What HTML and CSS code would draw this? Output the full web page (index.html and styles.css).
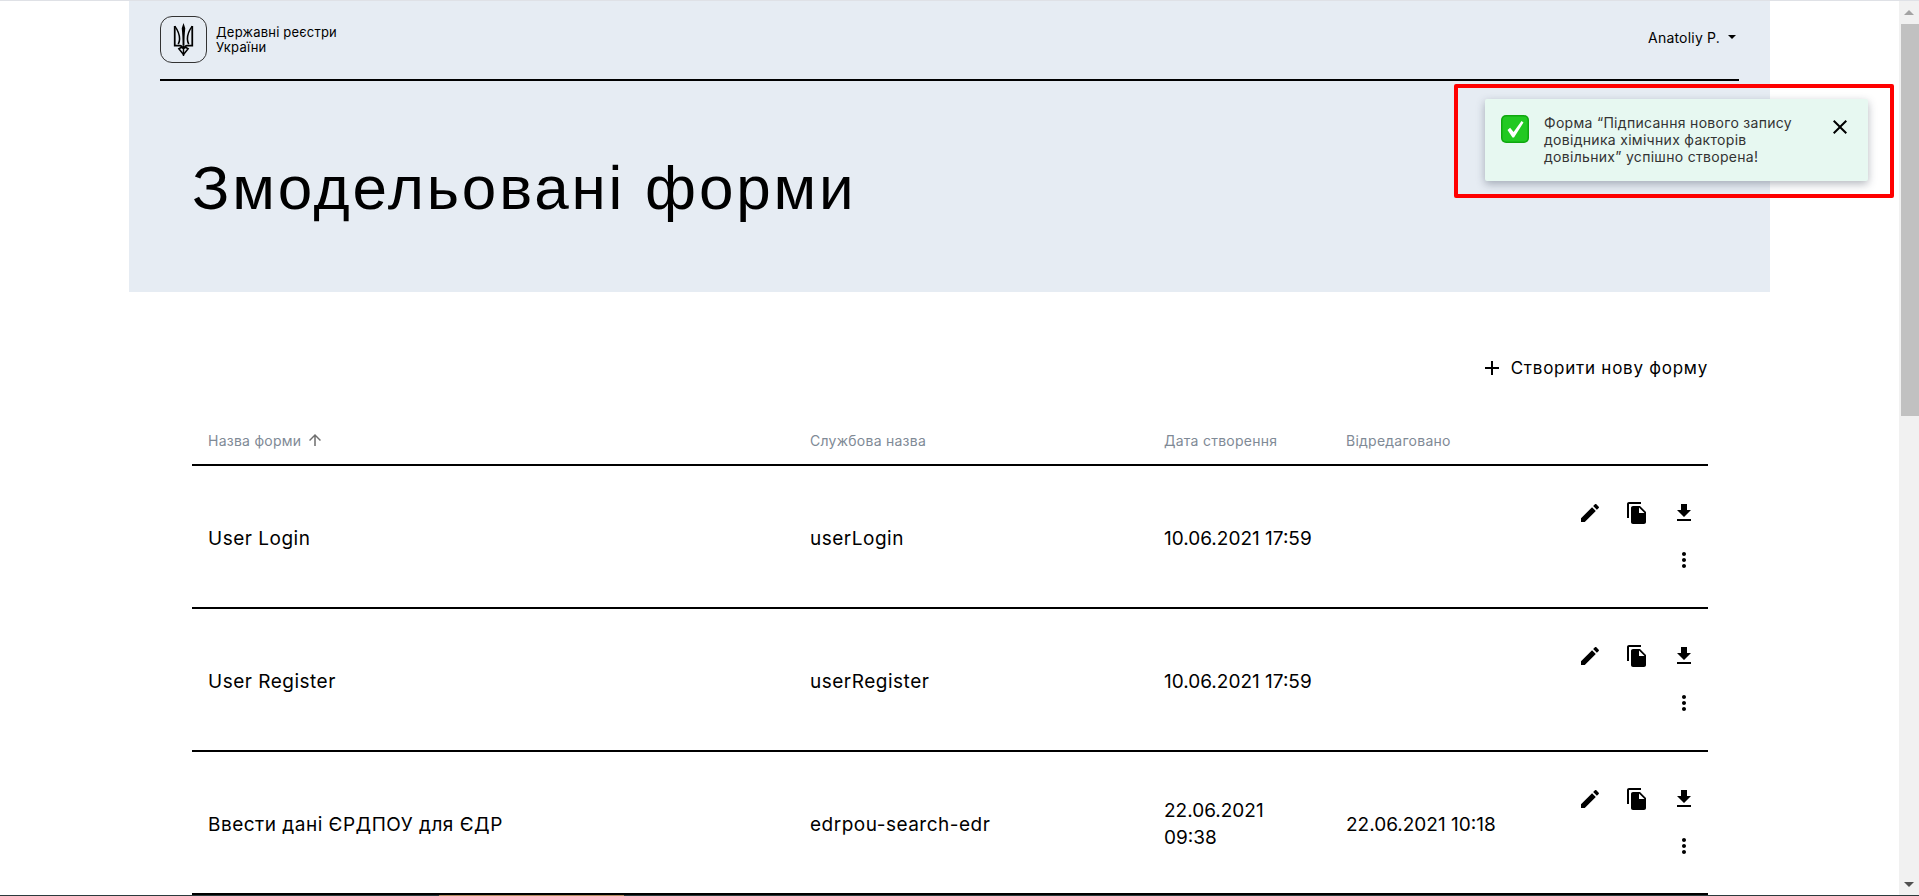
FILE: index.html
```html
<!DOCTYPE html>
<html lang="uk">
<head>
    <meta charset="UTF-8">
    <meta name="viewport" content="width=device-width, initial-scale=1.0">
    <title>Змодельовані форми</title>
    <link rel="stylesheet" href="styles.css">
</head>
<body>
    <div class="window">
        <div class="page">
            <header class="hero">
                <nav class="topbar">
                    <div class="brand">
                        <div class="brand-mark">
                            <svg class="trident" viewBox="0 0 20 32">
                                <path fill="none" stroke="#000" stroke-width="1.7" d="M1.5 3v19h5c1.6 0 2.4 1.2 2.8 3M18.500 3v19h-5c-1.600 0-2.400 1.200-2.800 3"/>
                                <path fill="none" stroke="#000" stroke-width="1.500" d="M1.500 3c3 4 4.700 8 4.700 12.500 0 2-.5 3.500-1.300 5M18.500 3c-3 4-4.700 8-4.700 12.500 0 2 .5 3.500 1.300 5"/>
                                <path fill="#000" d="M10 0l1.700 5c-.5 5-.8 10-.8 17h-1.800c0-7-.3-12-.8-17z"/>
                                <path fill="none" stroke="#000" stroke-width="1.500" d="M5.500 25l4.500 5.500 4.500-5.500-2.500-1.500h-4z"/>
                                <path fill="#000" d="M9.300 22h1.400v10h-1.400z"/>
                            </svg>
                        </div>
                        <div class="brand-name">Державні реєстри<br>України</div>
                    </div>
                    <div class="user-menu">Anatoliy P.<span class="caret"></span></div>
                </nav>
                <h1 class="hero-title">Змодельовані форми</h1>
            </header>

            <main class="content">
                <div class="toolbar">
                    <a class="create-link">
                        <svg class="icon" viewBox="0 0 24 24"><path d="M19 13h-6v6h-2v-6H5v-2h6V5h2v6h6v2z"/></svg>
                        Створити нову форму
                    </a>
                </div>

                <div class="row row-head">
                    <div class="cell">Назва форми
                        <svg class="sort-icon" viewBox="0 0 24 24"><path d="M4 12l1.41 1.41L11 7.830V20h2V7.830l5.580 5.590L20 12l-8-8-8 8z"/></svg>
                    </div>
                    <div class="cell">Службова назва</div>
                    <div class="cell">Дата створення</div>
                    <div class="cell">Відредаговано</div>
                    <div class="cell"></div>
                </div>

                <div class="row">
                    <div class="cell">User Login</div>
                    <div class="cell">userLogin</div>
                    <div class="cell cell-date">10.06.2021 17:59</div>
                    <div class="cell cell-date"></div>
                    <div class="actions">
                        <svg class="icon" viewBox="0 0 24 24"><path d="M3 17.25V21h3.75L17.81 9.94l-3.75-3.75L3 17.25zM20.71 7.04c.39-.39.39-1.02 0-1.41l-2.34-2.34c-.39-.39-1.02-.39-1.41 0l-1.83 1.83 3.75 3.75 1.83-1.83z"/></svg>
                        <svg class="icon" viewBox="0 0 24 24"><path d="M16 1H4c-1.1 0-2 .9-2 2v14h2V3h12V1zm-1 4l6 6v10c0 1.1-.9 2-2 2H7.99C6.89 23 6 22.1 6 21l.01-14c0-1.1.89-2 1.99-2h7zm-1 7h5.5L14 6.5V12z"/></svg>
                        <svg class="icon" viewBox="0 0 24 24"><path d="M19 9h-4V3H9v6H5l7 7 7-7zM5 18v2h14v-2H5z"/></svg>
                        <svg class="icon" viewBox="0 0 24 24"><path d="M12 8c1.1 0 2-.9 2-2s-.9-2-2-2-2 .9-2 2 .9 2 2 2zm0 2c-1.1 0-2 .9-2 2s.9 2 2 2 2-.9 2-2-.9-2-2-2zm0 6c-1.1 0-2 .9-2 2s.9 2 2 2 2-.9 2-2-.9-2-2-2z"/></svg>
                    </div>
                </div>

                <div class="row">
                    <div class="cell">User Register</div>
                    <div class="cell">userRegister</div>
                    <div class="cell cell-date">10.06.2021 17:59</div>
                    <div class="cell cell-date"></div>
                    <div class="actions">
                        <svg class="icon" viewBox="0 0 24 24"><path d="M3 17.25V21h3.75L17.81 9.94l-3.75-3.75L3 17.25zM20.71 7.04c.39-.39.39-1.02 0-1.41l-2.34-2.34c-.39-.39-1.02-.39-1.41 0l-1.83 1.83 3.75 3.75 1.83-1.83z"/></svg>
                        <svg class="icon" viewBox="0 0 24 24"><path d="M16 1H4c-1.1 0-2 .9-2 2v14h2V3h12V1zm-1 4l6 6v10c0 1.1-.9 2-2 2H7.99C6.89 23 6 22.1 6 21l.01-14c0-1.1.89-2 1.99-2h7zm-1 7h5.5L14 6.5V12z"/></svg>
                        <svg class="icon" viewBox="0 0 24 24"><path d="M19 9h-4V3H9v6H5l7 7 7-7zM5 18v2h14v-2H5z"/></svg>
                        <svg class="icon" viewBox="0 0 24 24"><path d="M12 8c1.1 0 2-.9 2-2s-.9-2-2-2-2 .9-2 2 .9 2 2 2zm0 2c-1.1 0-2 .9-2 2s.9 2 2 2 2-.9 2-2-.9-2-2-2zm0 6c-1.1 0-2 .9-2 2s.9 2 2 2 2-.9 2-2-.9-2-2-2z"/></svg>
                    </div>
                </div>

                <div class="row">
                    <div class="cell">Ввести дані ЄРДПОУ для ЄДР</div>
                    <div class="cell">edrpou-search-edr</div>
                    <div class="cell cell-date">22.06.2021<br>09:38</div>
                    <div class="cell cell-date">22.06.2021 10:18</div>
                    <div class="actions">
                        <svg class="icon" viewBox="0 0 24 24"><path d="M3 17.25V21h3.75L17.81 9.94l-3.75-3.75L3 17.25zM20.71 7.04c.39-.39.39-1.02 0-1.41l-2.34-2.34c-.39-.39-1.02-.39-1.41 0l-1.83 1.83 3.75 3.75 1.83-1.83z"/></svg>
                        <svg class="icon" viewBox="0 0 24 24"><path d="M16 1H4c-1.1 0-2 .9-2 2v14h2V3h12V1zm-1 4l6 6v10c0 1.1-.9 2-2 2H7.99C6.89 23 6 22.1 6 21l.01-14c0-1.1.89-2 1.99-2h7zm-1 7h5.5L14 6.5V12z"/></svg>
                        <svg class="icon" viewBox="0 0 24 24"><path d="M19 9h-4V3H9v6H5l7 7 7-7zM5 18v2h14v-2H5z"/></svg>
                        <svg class="icon" viewBox="0 0 24 24"><path d="M12 8c1.1 0 2-.9 2-2s-.9-2-2-2-2 .9-2 2 .9 2 2 2zm0 2c-1.1 0-2 .9-2 2s.9 2 2 2 2-.9 2-2-.9-2-2-2zm0 6c-1.1 0-2 .9-2 2s.9 2 2 2 2-.9 2-2-.9-2-2-2z"/></svg>
                    </div>
                </div>
            </main>
        </div>

        <div class="scrollbar">
            <div class="scroll-btn"><span class="arrow-up"></span></div>
            <div class="scroll-track"><div class="scroll-thumb"></div></div>
            <div class="scroll-btn"><span class="arrow-down"></span></div>
        </div>

        <div class="toast-highlight">
            <div class="toast">
                <svg class="toast-check" viewBox="0 0 28 28">
                    <rect width="28" height="28" rx="5" fill="#0fa80f"/>
                    <rect x="1.500" y="1.500" width="25" height="25" rx="4" fill="#22c922"/>
                    <path d="M6.500 15l2.600-2.300 3.500 4.300L20.500 6l2 1.500-9.500 15h-1.500z" fill="#fff"/>
                </svg>
                <p class="toast-text">Форма “Підписання нового запису довідника хімічних факторів довільних” успішно створена!</p>
                <svg class="toast-close" viewBox="0 0 24 24"><path d="M19 6.41L17.59 5 12 10.59 6.41 5 5 6.41 10.59 12 5 17.59 6.41 19 12 13.41 17.59 19 19 17.59 13.41 12z"/></svg>
            </div>
        </div>

        <div class="taskbar-edge"><span class="taskbar-tab"></span></div>
    </div>
</body>
</html>
```

FILE: styles.css
```css
* {
    margin: 0;
    padding: 0;
    box-sizing: border-box;
}

html, body {
    height: 100%;
    overflow: hidden;
}

body {
    font-family: Inter, "Noto Sans", sans-serif;
    background: white;
    color: black;
}

.window {
    position: relative;
    display: flex;
    height: 896px;
    border-top: 1px solid #dfe1e6;
}

.page {
    flex: 1;
    padding: 0 129px;
    overflow: hidden;
}

/* header block */
.hero {
    height: 291px;
    background: #e6ecf3;
    padding: 0 31px;
}

.topbar {
    display: flex;
    justify-content: space-between;
    align-items: center;
    height: 80px;
    border-bottom: 2px solid black;
    padding-top: 1px;
    padding-bottom: 2px;
}

.brand {
    display: flex;
    align-items: center;
    gap: 9px;
}

.brand-mark {
    display: flex;
    align-items: center;
    justify-content: center;
    width: 47px;
    height: 47px;
    border: 1px solid #333;
    border-radius: 12px;
}

.trident {
    width: 21px;
    height: 33px;
}

.brand-name {
    font-size: 13px;
    line-height: 15px;
    letter-spacing: 0.2px;
}

.user-menu {
    display: flex;
    align-items: center;
    font-size: 14px;
    letter-spacing: 0.2px;
    margin-top: -4px;
    margin-right: 3px;
}

.caret {
    width: 0;
    height: 0;
    margin-left: 8px;
    margin-top: -1px;
    border-left: 4px solid transparent;
    border-right: 4px solid transparent;
    border-top: 4px solid black;
}

.hero-title {
    font-family: "Liberation Sans", Arial, sans-serif;
    font-size: 62px;
    font-weight: 400;
    line-height: 76px;
    letter-spacing: 2.8px;
    margin-top: 69px;
    margin-left: 32px;
}

/* table */
.content {
    padding: 0 62px 0 63px;
}

.toolbar {
    display: flex;
    justify-content: flex-end;
    padding-top: 64px;
}

.create-link {
    display: flex;
    align-items: center;
    gap: 7px;
    font-size: 17px;
    line-height: 24px;
    letter-spacing: 0.75px;
}

.row {
    display: grid;
    grid-template-columns: 602px 354px 182px 1fr 156px;
    align-items: center;
    height: 143px;
    border-bottom: 2px solid black;
    font-size: 19px;
    line-height: 27px;
    letter-spacing: 0.5px;
}

.row-head {
    height: 86px;
    padding-top: 38px;
    color: #7f8a96;
    font-size: 14px;
    line-height: 20px;
    letter-spacing: 0.25px;
}

.row .cell {
    padding: 3px 16px 0;
}

.row-head .cell {
    padding-top: 0;
}

.row .cell-date {
    letter-spacing: 0;
}

.icon {
    width: 24px;
    height: 24px;
    fill: black;
}

.sort-icon {
    width: 18px;
    height: 18px;
    fill: #6e6e6e;
    vertical-align: -3px;
}

.actions {
    display: grid;
    grid-template-columns: repeat(3, 24px);
    justify-content: end;
    justify-items: center;
    gap: 23px;
    padding-right: 12px;
}

.actions .icon:last-child {
    grid-column: 3;
}

/* fake browser scrollbar */
.scrollbar {
    display: flex;
    flex-direction: column;
    width: 20px;
    background: #f1f1f1;
}

.scroll-btn {
    display: flex;
    align-items: center;
    justify-content: center;
    height: 23px;
}

.arrow-up {
    border-left: 5px solid transparent;
    border-right: 5px solid transparent;
    border-bottom: 5px solid #a3a3a3;
}

.arrow-down {
    border-left: 5px solid transparent;
    border-right: 5px solid transparent;
    border-top: 5px solid #505050;
}

.scroll-track {
    flex: 1;
}

.scroll-thumb {
    height: 392px;
    margin-left: 2px;
    background: #c1c1c1;
}

/* toast sits over the page */
.toast-highlight {
    position: absolute;
    top: 83px;
    left: 1454px;
    width: 440px;
    height: 114px;
    border: 4px solid #f00;
    border-radius: 2px;
    padding: 11px 27px;
}

.toast {
    display: flex;
    align-items: flex-start;
    width: 383px;
    height: 82px;
    padding: 16px 16px 0;
    background: #e7f8f1;
    border-radius: 2px;
    box-shadow: 0 3px 8px rgba(40, 50, 70, 0.35);
}

.toast-check {
    flex: none;
    width: 28px;
    height: 28px;
}

.toast-text {
    width: 262px;
    margin-left: 15px;
    margin-top: -1px;
    font-size: 14px;
    line-height: 17px;
    letter-spacing: 0.3px;
    color: #333;
}

.toast-close {
    flex: none;
    width: 24px;
    height: 24px;
    margin-left: 22px;
}

.taskbar-edge {
    position: absolute;
    left: 0;
    right: 0;
    bottom: 0;
    height: 1px;
    background: #2b3a3c;
}

.taskbar-tab {
    display: block;
    width: 185px;
    height: 1px;
    margin-left: 439px;
    background: #b08a60;
}
```
